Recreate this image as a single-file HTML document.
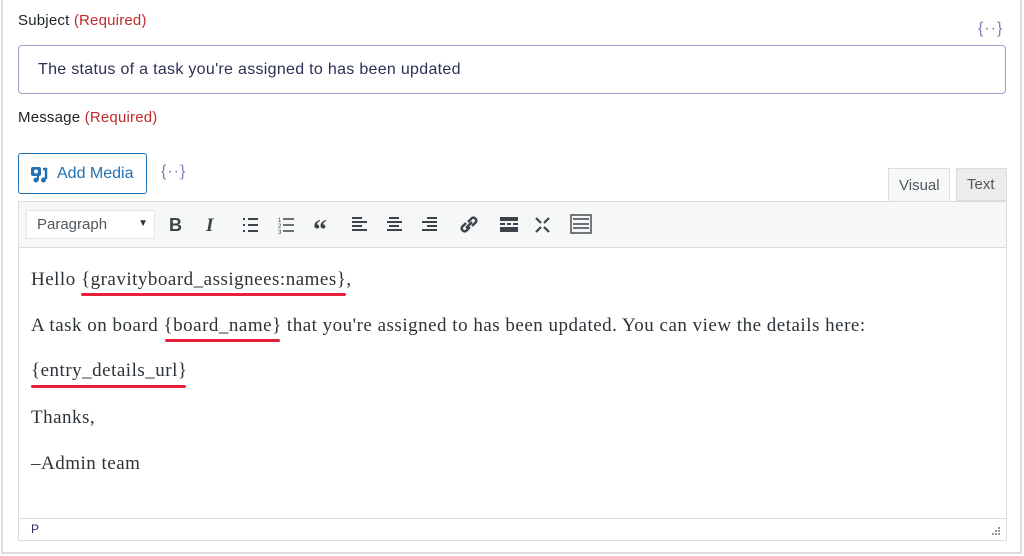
<!DOCTYPE html>
<html><head><style>
*{box-sizing:border-box;margin:0;padding:0}
body{width:1024px;height:556px;background:#fff;position:relative;font-family:"Liberation Sans",sans-serif;overflow:hidden}
.frame{position:absolute;left:1px;top:-2px;width:1021px;height:556px;border:2px solid #dcdcde}
.abs{position:absolute}
.lbl{font-size:15px;color:#1d2327;letter-spacing:0.2px}
.req{color:#c02b2b}
.merge{color:#7b7fb3;font-size:16px;letter-spacing:1px}
.line{position:absolute;height:3px;background:#e8213a;border-radius:2px}
.p{position:absolute;left:31px;font-family:"Liberation Serif",serif;font-size:19px;letter-spacing:0.5px;color:#2c3338}
</style></head><body>
<div class="frame"></div>
<div class="abs lbl" style="left:18px;top:12px">Subject <span class="req">(Required)</span></div>
<div class="abs merge" style="left:978px;top:20px">{··}</div>
<div class="abs" style="left:18px;top:45px;width:988px;height:49px;border:1px solid #9a9ec8;border-radius:4px;font-size:16px;letter-spacing:0.3px;color:#2c3055;padding:15px 0 0 19px">The status of a task you're assigned to has been updated</div>
<div class="abs lbl" style="left:18px;top:109px">Message <span class="req">(Required)</span></div>
<div class="abs" style="left:18px;top:153px;width:129px;height:41px;border:1px solid #2271b1;border-radius:3px;color:#2271b1;font-size:16px;padding:11px 0 0 38px">Add Media
<svg class="abs" style="left:11px;top:11px" width="20" height="20" viewBox="0 0 20 20"><rect x="1" y="2" width="10" height="9" rx="2" fill="#2271b1"/><circle cx="6" cy="6.5" r="2" fill="#fff"/><path d="M13 4h3v10" stroke="#2271b1" stroke-width="2.5" fill="none"/><circle cx="13.5" cy="15" r="2.5" fill="#2271b1"/><circle cx="6" cy="15" r="2.5" fill="#2271b1"/><path d="M8 11v4" stroke="#2271b1" stroke-width="2"/></svg></div>
<div class="abs merge" style="left:161px;top:163px">{··}</div>
<div class="abs" style="left:888px;top:168px;width:62px;height:34px;background:#f6f7f7;border:1px solid #dcdcde;border-bottom:none;font-size:15px;color:#50575e;padding:8px 0 0 10px">Visual</div>
<div class="abs" style="left:956px;top:168px;width:51px;height:33px;background:#ececec;border:1px solid #dcdcde;font-size:15px;color:#50575e;padding:7px 0 0 10px">Text</div>
<div class="abs" style="left:18px;top:201px;width:989px;height:340px;border:1px solid #dcdcde"></div>
<div class="abs" style="left:19px;top:202px;width:987px;height:46px;background:#f6f7f7;border-bottom:1px solid #dcdcde"></div>
<div class="abs" style="left:26px;top:210px;width:129px;height:29px;background:#fff;border:1px solid #e6e6e6;font-size:15px;color:#50575e;padding:5px 0 0 10px">Paragraph<span style="position:absolute;right:6px;top:7px;font-size:10px;color:#333">▼</span></div>
<svg class="abs" style="left:160px;top:210px" width="440" height="30" viewBox="0 0 440 30" fill="#3c434a" stroke="#3c434a">
<text x="9" y="21" font-family="Liberation Sans" font-weight="bold" font-size="18" stroke="none">B</text>
<text x="46" y="21" font-family="Liberation Serif" font-style="italic" font-weight="bold" font-size="19" stroke="none">I</text>
<g stroke-width="2"><path d="M88 9h10M88 15h10M88 21h10"/><path d="M83 9h2M83 15h2M83 21h2"/></g>
<g stroke-width="1.6"><path d="M123 9h11M123 15h11M123 21h11"/></g><text x="118" y="12" font-size="6" stroke="none">1</text><text x="118" y="18" font-size="6" stroke="none">2</text><text x="118" y="24" font-size="6" stroke="none">3</text>
<text x="153" y="29" font-family="Liberation Serif" font-weight="bold" font-size="28" stroke="none">“</text>
<g stroke-width="2"><path d="M192 8h10M192 12h15M192 16h10M192 20h15"/><path d="M229 8h10M227 12h15M229 16h10M227 20h15"/><path d="M267 8h10M262 12h15M267 16h10M262 20h15"/></g>
<g fill="none" stroke-width="2.4"><path d="M306 13l-4 4a3 3 0 0 0 4 4l4-4M312 16l4-4a3 3 0 0 0-4-4l-4 4M306 18l6-6"/></g>
<g stroke="none"><rect x="340" y="7" width="18" height="4"/><rect x="340" y="13" width="5" height="2"/><rect x="347" y="13" width="4" height="2"/><rect x="353" y="13" width="5" height="2"/><rect x="340" y="17" width="18" height="5"/></g>
<g stroke-width="2.2"><path d="M376 8l5 5M389 8l-5 5M376 22l5-5M389 22l-5-5"/></g>
<g fill="none" stroke-width="1.4"><rect x="411" y="5" width="20" height="18"/><path d="M413 9h16M413 14h16M413 18h16"/></g>
</svg>
<div class="p" style="top:269px">Hello {gravityboard_assignees:names},</div>
<div class="line" style="left:81px;top:293px;width:265px"></div>
<div class="p" style="top:315px">A task on board {board_name} that you're assigned to has been updated. You can view the details here:</div>
<div class="line" style="left:165px;top:339px;width:115px"></div>
<div class="p" style="top:360px">{entry_details_url}</div>
<div class="line" style="left:31px;top:385px;width:155px"></div>
<div class="p" style="top:407px">Thanks,</div>
<div class="p" style="top:453px">–Admin team</div>
<div class="abs" style="left:19px;top:518px;width:987px;border-top:1px solid #dcdcde"></div>
<div class="abs" style="left:31px;top:522px;font-size:12px;color:#2c3055">P</div>
<svg class="abs" style="left:990px;top:525px" width="12" height="12" fill="#999"><rect x="8" y="2" width="2" height="2"/><rect x="5" y="5" width="2" height="2"/><rect x="8" y="5" width="2" height="2"/><rect x="2" y="8" width="2" height="2"/><rect x="5" y="8" width="2" height="2"/><rect x="8" y="8" width="2" height="2"/></svg>
</body></html>
